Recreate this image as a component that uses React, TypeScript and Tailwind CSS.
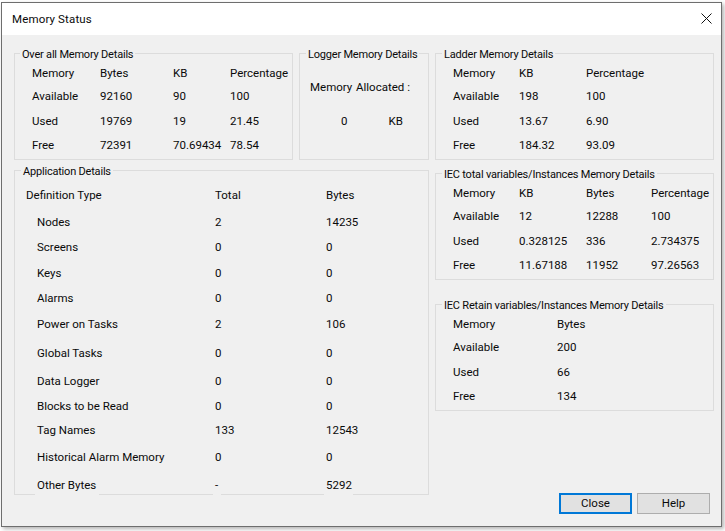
import React from 'react';

const font = { fontFamily: 'Roboto, sans-serif' };

// one group box with its caption sitting on the top border
const Group = ({ title, className, titleLeft = 'left-[6px]', children }: { title: string; className: string; titleLeft?: string; children: React.ReactNode }) => (
  <div className={'relative border border-[#dcdcdc] ' + className}>
    <span className={'absolute -top-[7px] bg-[#f0f0f0] px-[2px] leading-[15px] whitespace-nowrap text-[11px] tracking-[-0.2px] ' + titleLeft}>{title}</span>
    {children}
  </div>
);

const Table = ({ rows, cols }: { rows: string[][]; cols: string }) => (
  <div className={'grid grid-rows-[23px_24px_25px_24px] pt-[8px] pl-[17px] items-center whitespace-nowrap ' + cols}>
    {rows.flat().map((c, i) => (
      <span key={i}>{c}</span>
    ))}
  </div>
);

const appRows: [string, string, string, string][] = [
  ['Nodes', '2', '14235', 'mt-[7px]'],
  ['Screens', '0', '0', 'mt-[5px]'],
  ['Keys', '0', '0', 'mt-[6px]'],
  ['Alarms', '0', '0', 'mt-[5px]'],
  ['Power on Tasks', '2', '106', 'mt-[6px]'],
  ['Global Tasks', '0', '0', 'mt-[9px]'],
  ['Data Logger', '0', '0', 'mt-[8px]'],
  ['Blocks to be Read', '0', '0', 'mt-[5px]'],
  ['Tag Names', '133', '12543', 'mt-[4px]'],
  ['Historical Alarm Memory', '0', '0', 'mt-[7px]'],
];

export default function App() {
  return (
    <div className="w-[725px] h-[531px] bg-white overflow-hidden text-[11.5px] text-[#0a0a0a]" style={font}>
      <div className="ml-[1px] mt-[2px] w-[721px] h-[525px] border border-[#6e6e6e] bg-[#f0f0f0] flex flex-col shadow-[2px_2px_4px_rgba(0,0,0,0.3)]">
        <div className="h-[32px] shrink-0 bg-white flex items-center justify-between pl-[10px] pr-[9px]">
          <span className="pt-[1px] tracking-[0.15px]">Memory Status</span>
          <svg className="mb-[2px]" width="11" height="11" viewBox="0 0 11 11" stroke="#111" strokeWidth="1" fill="none">
            <path d="M0.5 0.5 L10.5 10.5 M10.5 0.5 L0.5 10.5" />
          </svg>
        </div>
        <div className="flex pl-[12px] pt-[18px] gap-[6px]">
          <div className="w-[415px] flex flex-col gap-[10px]">
            <div className="flex gap-[6px]">
              <Group title="Over all Memory Details" titleLeft="left-[5px]" className="w-[279px] h-[107px]">
                <Table
                  cols="grid-cols-[68px_73px_57px_1fr]"
                  rows={[
                    ['Memory', 'Bytes', 'KB', 'Percentage'],
                    ['Available', '92160', '90', '100'],
                    ['Used', '19769', '19', '21.45'],
                    ['Free', '72391', '70.69434', '78.54'],
                  ]}
                />
              </Group>
              <Group title="Logger Memory Details" className="w-[130px] h-[107px]">
                <div className="flex flex-col pt-[26px] whitespace-nowrap">
                  <div className="h-[15px] flex items-center pl-[10px] gap-[6px]">
                    <span className="w-[40px]">Memory</span>
                    <span>Allocated :</span>
                  </div>
                  <div className="mt-[19px] h-[15px] flex items-center pl-[41px] gap-[41px]">
                    <span>0</span>
                    <span>KB</span>
                  </div>
                </div>
              </Group>
            </div>
            <Group title="Application Details" className="h-[325px]">
              <div className="pt-[15px] pl-[11px] whitespace-nowrap">
                <div className="grid grid-cols-[189px_111px_1fr] h-[20px] items-center">
                  <span>Definition Type</span>
                  <span>Total</span>
                  <span>Bytes</span>
                </div>
                {appRows.map(([name, total, bytes, mt]) => (
                  <div key={name} className={'grid grid-cols-[189px_111px_1fr] h-[20px] items-center ' + mt}>
                    <span className="pl-[11px]">{name}</span>
                    <span>{total}</span>
                    <span>{bytes}</span>
                  </div>
                ))}
                <div className="grid grid-cols-[189px_111px_1fr] h-[20px] mt-[8px] items-center">
                  <span className="ml-[9px] pl-[2px] w-[64px] h-full flex items-center bg-[#f0f0f0]">Other Bytes</span>
                  <span className="-ml-[2px] pl-[2px] w-[8px] h-full flex items-center bg-[#f0f0f0]">-</span>
                  <span className="-ml-[2px] pl-[2px] w-[29px] h-full flex items-center bg-[#f0f0f0]">5292</span>
                </div>
              </div>
            </Group>
          </div>
          <div className="w-[279px] flex flex-col">
            <Group title="Ladder Memory Details" className="h-[107px]">
              <Table
                cols="grid-cols-[66px_67px_1fr]"
                rows={[
                  ['Memory', 'KB', 'Percentage'],
                  ['Available', '198', '100'],
                  ['Used', '13.67', '6.90'],
                  ['Free', '184.32', '93.09'],
                ]}
              />
            </Group>
            <Group title="IEC total variables/Instances Memory Details" className="h-[107px] mt-[13px]">
              <Table
                cols="grid-cols-[66px_67px_65px_1fr]"
                rows={[
                  ['Memory', 'KB', 'Bytes', 'Percentage'],
                  ['Available', '12', '12288', '100'],
                  ['Used', '0.328125', '336', '2.734375'],
                  ['Free', '11.67188', '11952', '97.26563'],
                ]}
              />
            </Group>
            <Group title="IEC Retain variables/Instances Memory Details" className="h-[107px] mt-[24px]">
              <Table
                cols="grid-cols-[104px_1fr]"
                rows={[
                  ['Memory', 'Bytes'],
                  ['Available', '200'],
                  ['Used', '66'],
                  ['Free', '134'],
                ]}
              />
            </Group>
            <div className="flex justify-end gap-[5px] mt-[82px] pr-[4px]">
              <button className="w-[73px] h-[21px] bg-[#e1e1e1] border-2 border-[#0078d7] flex items-center justify-center">Close</button>
              <button className="w-[73px] h-[21px] bg-[#e1e1e1] border border-[#adadad] flex items-center justify-center">Help</button>
            </div>
          </div>
        </div>
      </div>
    </div>
  );
}
